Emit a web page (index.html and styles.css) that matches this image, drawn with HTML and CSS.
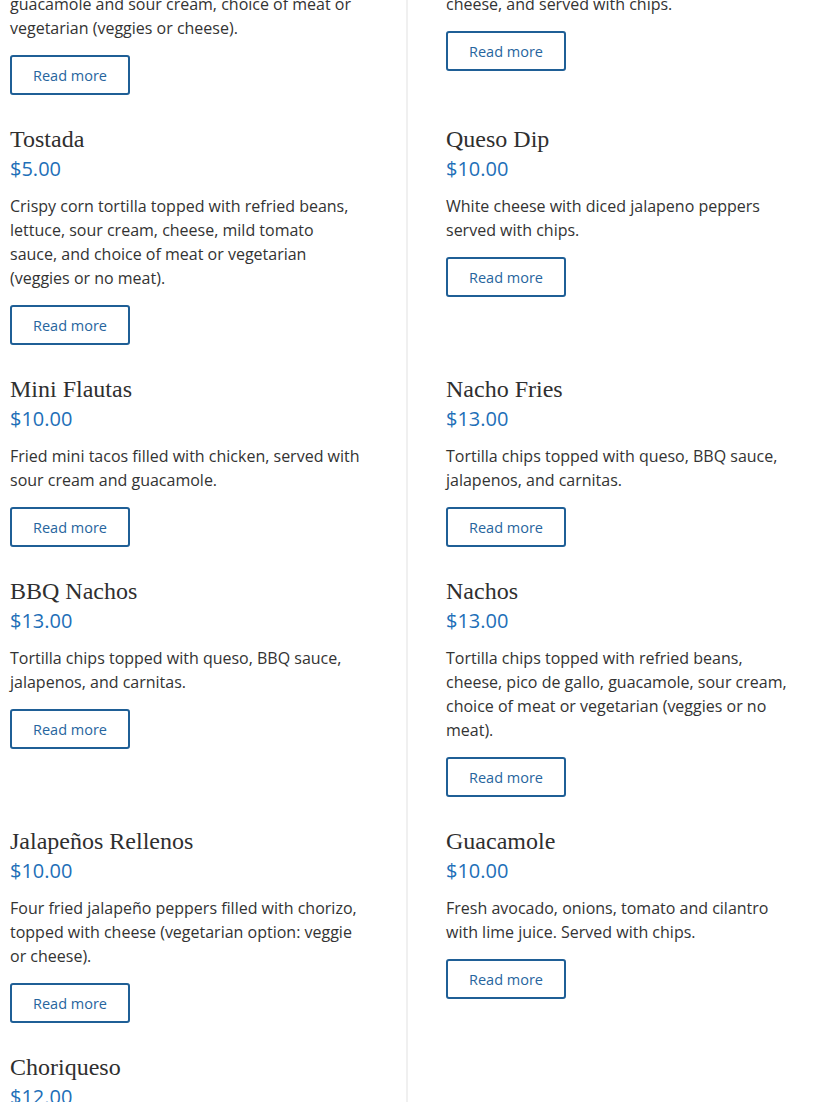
FILE: index.html
```html
<!DOCTYPE html>
<html lang="en">
<head>
<meta charset="utf-8">
<title>Menu</title>
<link rel="stylesheet" href="styles.css">
</head>
<body>
<div class="menu">
  <div class="cell left">
    <p class="desc">guacamole and sour cream, choice of meat or vegetarian (veggies or cheese).</p>
    <a class="btn" href="#">Read more</a>
  </div>
  <div class="cell right">
    <p class="desc first-right">cheese, and served with chips.</p>
    <a class="btn" href="#">Read more</a>
  </div>

  <div class="cell left">
    <h3 class="title">Tostada</h3>
    <div class="price">$5.00</div>
    <p class="desc">Crispy corn tortilla topped with refried beans, lettuce, sour cream, cheese, mild tomato sauce, and choice of meat or vegetarian (veggies or no meat).</p>
    <a class="btn" href="#">Read more</a>
  </div>
  <div class="cell right">
    <h3 class="title">Queso Dip</h3>
    <div class="price">$10.00</div>
    <p class="desc">White cheese with diced jalapeno peppers served with chips.</p>
    <a class="btn" href="#">Read more</a>
  </div>

  <div class="cell left">
    <h3 class="title">Mini Flautas</h3>
    <div class="price">$10.00</div>
    <p class="desc">Fried mini tacos filled with chicken, served with sour cream and guacamole.</p>
    <a class="btn" href="#">Read more</a>
  </div>
  <div class="cell right">
    <h3 class="title">Nacho Fries</h3>
    <div class="price">$13.00</div>
    <p class="desc">Tortilla chips topped with queso, BBQ sauce, jalapenos, and carnitas.</p>
    <a class="btn" href="#">Read more</a>
  </div>

  <div class="cell left">
    <h3 class="title">BBQ Nachos</h3>
    <div class="price">$13.00</div>
    <p class="desc">Tortilla chips topped with queso, BBQ sauce, jalapenos, and carnitas.</p>
    <a class="btn" href="#">Read more</a>
  </div>
  <div class="cell right">
    <h3 class="title">Nachos</h3>
    <div class="price">$13.00</div>
    <p class="desc">Tortilla chips topped with refried beans, cheese, pico de gallo, guacamole, sour cream, choice of meat or vegetarian (veggies or no meat).</p>
    <a class="btn" href="#">Read more</a>
  </div>

  <div class="cell left">
    <h3 class="title">Jalapeños Rellenos</h3>
    <div class="price">$10.00</div>
    <p class="desc">Four fried jalapeño peppers filled with chorizo, topped with cheese (vegetarian option: veggie or cheese).</p>
    <a class="btn" href="#">Read more</a>
  </div>
  <div class="cell right">
    <h3 class="title">Guacamole</h3>
    <div class="price">$10.00</div>
    <p class="desc">Fresh avocado, onions, tomato and cilantro with lime juice. Served with chips.</p>
    <a class="btn" href="#">Read more</a>
  </div>

  <div class="cell left">
    <h3 class="title">Choriqueso</h3>
    <div class="price">$12.00</div>
    <p class="desc">Melted cheese with chorizo, served with tortillas.</p>
    <a class="btn" href="#">Read more</a>
  </div>
  <div class="cell right">
  </div>
</div>
</body>
</html>
```
FILE: styles.css
```css
html, body {
  margin: 0;
  padding: 0;
  background: #ffffff;
}

body {
  font-family: "Open Sans", "Liberation Sans", sans-serif;
  color: #333333;
  overflow: hidden;
}

.menu {
  display: grid;
  grid-template-columns: 406px 1fr;
  margin-top: -8px;
}

.cell {
  display: flex;
  flex-direction: column;
  align-items: flex-start;
  padding-bottom: 29px;
}

.left {
  padding-left: 10px;
  padding-right: 40px;
}

.right {
  border-left: 2px solid #f0f0f0;
  padding-left: 38px;
  padding-right: 18px;
}

.title {
  font-family: "Liberation Serif", "DejaVu Serif", serif;
  font-weight: 400;
  font-size: 24px;
  line-height: 30px;
  color: #2f2f2f;
  margin: 0;
}

.price {
  font-size: 20px;
  line-height: 30px;
  color: #1e6fb8;
}

.desc {
  width: 351px;
  font-size: 16px;
  line-height: 24px;
  margin: 10px 0 15px 0;
  color: #333333;
}

.left > .desc:first-child {
  margin-top: 0;
}

.first-right {
  margin-top: 0;
}

.btn {
  box-sizing: border-box;
  width: 120px;
  height: 40px;
  display: flex;
  align-items: center;
  justify-content: center;
  border: 2px solid #1f5f96;
  border-radius: 3px;
  font-size: 14.5px;
  color: #27659e;
  text-decoration: none;
}
```
